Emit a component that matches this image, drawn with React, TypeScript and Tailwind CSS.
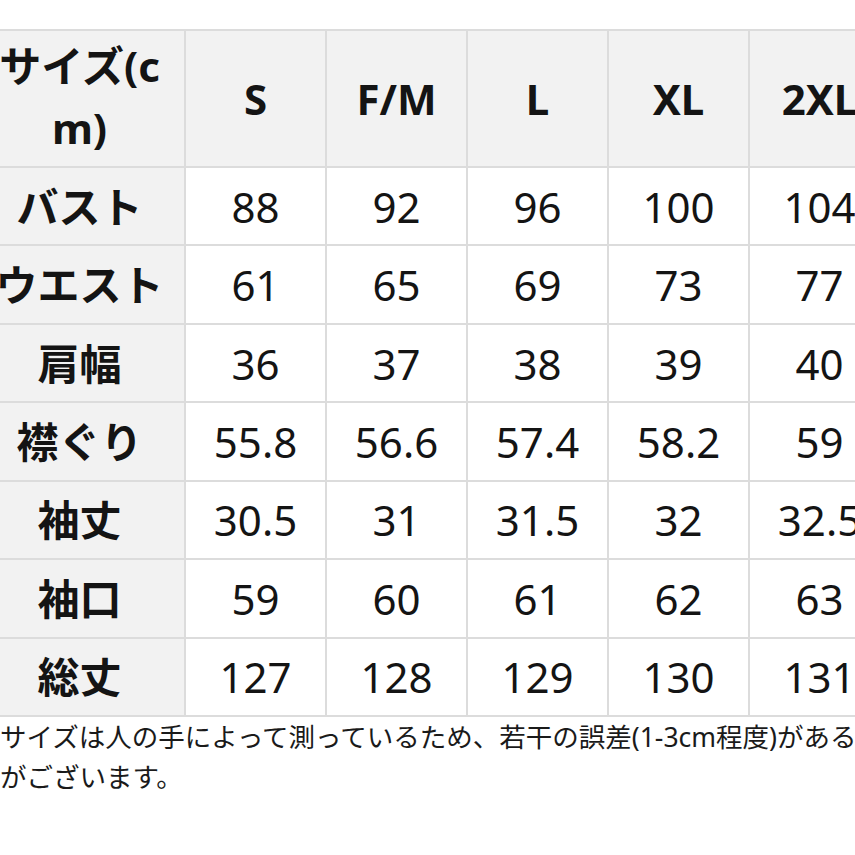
import React from "react";

const headers = ["S", "F/M", "L", "XL", "2XL"];
const rows: [string, string[]][] = [
  ["バスト", ["88", "92", "96", "100", "104"]],
  ["ウエスト", ["61", "65", "69", "73", "77"]],
  ["肩幅", ["36", "37", "38", "39", "40"]],
  ["襟ぐり", ["55.8", "56.6", "57.4", "58.2", "59"]],
  ["袖丈", ["30.5", "31", "31.5", "32", "32.5"]],
  ["袖口", ["59", "60", "61", "62", "63"]],
  ["総丈", ["127", "128", "129", "130", "131"]],
];

export default function App() {
  return (
    <div
      className="w-[855px] h-[855px] overflow-hidden bg-white text-[#141414]"
      style={{ fontFamily: '"Noto Sans", "Noto Sans CJK JP", sans-serif' }}
    >
      <div className="pt-[29px]">
        <div className="ml-[-25px] w-[1100px]">
          <div className="grid grid-cols-[209px_139px_139px_139px_139px_139px] grid-rows-[135px_repeat(7,76.43px)] gap-[2px] bg-[#dcdcdc] py-[2px] pr-[2px] w-max">
            <div className="bg-[#f2f2f2] flex items-center justify-center text-center font-bold text-[42px] leading-[62px] pb-[4px]">
              <span>
                サイズ(c
                <br />
                m)
              </span>
            </div>
            {headers.map((h) => (
              <div
                key={h}
                className="bg-[#f2f2f2] flex items-center justify-center font-bold text-[42px] whitespace-nowrap"
              >
                {h}
              </div>
            ))}
            {rows.map(([label, vals]) => (
              <React.Fragment key={label}>
                <div className="bg-[#f2f2f2] flex items-center justify-center font-bold text-[42px] whitespace-nowrap">
                  {label}
                </div>
                {vals.map((v, i) => (
                  <div
                    key={i}
                    className="bg-white flex items-center justify-center text-[42px] whitespace-nowrap"
                  >
                    {v}
                  </div>
                ))}
              </React.Fragment>
            ))}
          </div>
        </div>
        <p className="text-[26.5px] leading-[40px] whitespace-nowrap text-[#1a1a1a]">
          サイズは人の手によって測っているため、若干の誤差(1-3cm程度)がある場合
          <br />
          がございます。
        </p>
      </div>
    </div>
  );
}
